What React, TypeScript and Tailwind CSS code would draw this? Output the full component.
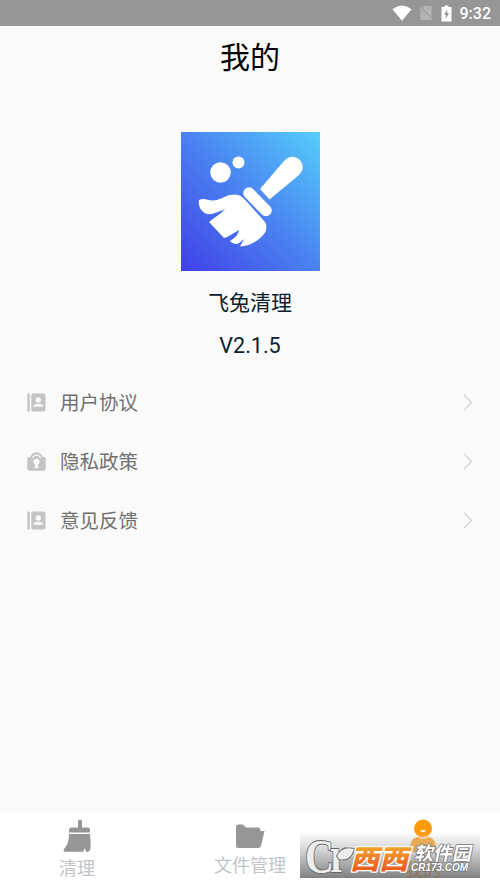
import { FC, ReactNode } from "react";

const CJK = "font-['Noto_Sans_CJK_SC',sans-serif]";

const StatusBar: FC = () => (
  <div className="flex h-[26px] items-center justify-end bg-[#969696] pr-[9px] text-white">
    {/* Wifi */}
    <svg className="mr-[7px] h-[16px] w-[20px]" viewBox="0 0 20 16">
      <path d="M0.4 4.2Q10-3 19.6 4.2L10 15.8Z" fill="#fff" />
    </svg>
    {/* No sim */}
    <svg className="mr-[8px] h-[16px] w-[14px]" viewBox="0 0 14 16">
      <path d="M5 1H12.5V15H1.5V5Z" fill="#b5b5b5" />
      <path d="M0 1.5L13.5 15" stroke="#969696" strokeWidth="2.6" />
      <path d="M0.5 2.5L13 15" stroke="#bdbdbd" strokeWidth="1.3" />
    </svg>
    {/* Battery */}
    <svg className="mr-[8px] h-[17px] w-[11px]" viewBox="0 0 11 17">
      <path d="M3.5 0.5H7.5V2H10.5V16.5H0.5V2H3.5Z" fill="#fff" />
      <path d="M6.5 4.5L3 9.8H5L4.5 14L8 8.3H6Z" fill="#969696" />
    </svg>
    <span className="pt-[2px] font-[Roboto,sans-serif] text-[16px] leading-none font-medium">
      9:32
    </span>
  </div>
);

const AppLogo: FC = () => (
  <svg className="h-[139px] w-[139px]" viewBox="0 0 139 139">
    <defs>
      <linearGradient id="logo" x1="0" y1="1" x2="1" y2="0">
        <stop offset="0" stopColor="#4040e7" />
        <stop offset="0.5" stopColor="#4a82f1" />
        <stop offset="1" stopColor="#55cefb" />
      </linearGradient>
    </defs>
    <rect width="139" height="139" fill="url(#logo)" />
    <g fill="#fff">
      <circle cx="39.5" cy="40.5" r="10.3" />
      <circle cx="57.5" cy="30.5" r="6" />
      <path d="M79 57L103 29Q111 21 119 28Q125 36 118 43L88.5 67.5Z" />
      <path
        d="M68 61L85 78.5"
        stroke="#fff"
        strokeWidth="11.5"
        strokeLinecap="round"
      />
      <path d="M18 68C24 65 28 70 36 68C44 65 50 61 57 63C61 64 63 67 66 70L84 90C86 93 86 99 83 102C77 109 69 114 59 114.5L63 107C60 109 59 111 56 112C53 112 51 111 49 109C54 106 57 103 58 98C52 101 48 105 43 106L28 90C34 85 40 82 44 77C37 80 31 83 26 82C20 80 17 74 18 68Z" />
    </g>
  </svg>
);

const ContactIcon: FC = () => (
  <svg className="h-[19px] w-[19px]" viewBox="0 0 19 19">
    <rect x="0.3" y="0.5" width="2.5" height="18" rx="0.5" fill="#c4c4c4" />
    <rect x="4.3" y="0.5" width="14.2" height="18" rx="2" fill="#c4c4c4" />
    <circle cx="11.3" cy="7" r="2.7" fill="#fafafa" />
    <path d="M6.3 13.8Q6.3 10.7 11.3 10.7T16.3 13.8Z" fill="#fafafa" />
  </svg>
);

const LockIcon: FC = () => (
  <svg className="h-[19px] w-[19px]" viewBox="0 0 19 19">
    <path
      d="M0.3 7Q0.3 5 2.5 4.8H3.5Q5 0.3 9.5 0.3T15.5 4.8H16.5Q18.7 5 18.7 7V16.5Q18.7 18.7 16.5 18.7H2.5Q0.3 18.7 0.3 16.5Z"
      fill="#c4c4c4"
    />
    <path d="M5.2 5.8Q9.5 0 13.8 5.8" fill="none" stroke="#fafafa" strokeWidth="1.2" />
    <circle cx="9.5" cy="9.8" r="3" fill="#fafafa" />
    <path d="M8.2 11H10.8L11.5 16H7.5Z" fill="#fafafa" />
  </svg>
);

interface MenuRowProps {
  icon: ReactNode;
  label: string;
}

const MenuRow: FC<MenuRowProps> = ({ icon, label }) => (
  <div className="flex h-[59px] items-center pr-[27px] pl-[27px]">
    {icon}
    <span className={`${CJK} ml-[14px] flex-1 pb-px text-[19.5px] leading-none text-[#707070]`}>
      {label}
    </span>
    <svg className="h-[17px] w-[10px]" viewBox="0 0 10 17">
      <path d="M1 0.8L8.5 8.5L1 16.2" fill="none" stroke="#d4d4d4" strokeWidth="1.4" />
    </svg>
  </div>
);

const TabBar: FC = () => (
  <div className={`${CJK} flex h-[76px] bg-white text-[18px] leading-none text-[#bfc4c9]`}>
    <div className="flex w-[154px] flex-col items-center pt-[8px]">
      <svg className="h-[32px] w-[28px]" viewBox="0 0 28 32" fill="#969696">
        <rect x="15" y="0" width="4" height="9" rx="1" />
        <path d="M8 7.5H25Q27 7.5 27 10V12.5H6V10Q6 7.5 8 7.5Z" />
        <path d="M6 14H27Q28 22 27.5 29Q27 32 23 31.8L22 28L20 31.8H1Q0 31 1 29Q6 24 6 14Z" />
      </svg>
      <span className="mt-[6px]">清理</span>
    </div>
    <div className="flex w-[192px] flex-col items-center pt-[12px]">
      <svg className="h-[25px] w-[30px]" viewBox="0 0 30 25" fill="#969696">
        <path d="M1 3Q1 0.5 3 0.5H8L11 3.5H23Q25.5 3.5 25.5 7H29.5L26 22Q25.5 24 23 24H3.5Q1 24 1 21.5Z" />
      </svg>
      <span className="mt-[6px]">文件管理</span>
    </div>
    <div className="flex w-[154px] flex-col items-center pt-[7px] text-[#f59e1a]">
      <svg className="h-[33px] w-[28px]" viewBox="0 0 28 33">
        <circle cx="14" cy="9.5" r="9" fill="#ff9a0b" />
        <path d="M10.8 11.2H17.2Q14 15.5 10.8 11.2Z" fill="#fff" />
        <path d="M1 33Q0 19 9 18Q14 21 19 18Q28 19 27 33Z" fill="#ff9a0b" />
      </svg>
      <span className="mt-[7px]">我的</span>
    </div>
  </div>
);

const Watermark: FC = () => (
  <svg className="absolute top-[832px] left-[300px] h-[46px] w-[180px]" viewBox="0 0 180 46">
    <defs>
      <linearGradient id="shade" x1="0" y1="0" x2="0" y2="1">
        <stop offset="0" stopColor="#ccc" stopOpacity="0" />
        <stop offset="0.15" stopColor="#ccc" stopOpacity="0.35" />
        <stop offset="0.55" stopColor="#999" stopOpacity="0.65" />
        <stop offset="1" stopColor="#606060" stopOpacity="0.8" />
      </linearGradient>
      <linearGradient id="orange" x1="0" y1="0" x2="0" y2="1">
        <stop offset="0.1" stopColor="#f7b430" />
        <stop offset="1" stopColor="#e84519" />
      </linearGradient>
    </defs>
    <rect width="180" height="46" fill="url(#shade)" />
    {/* Cr mark with a leaf on the r */}
    <g
      fontFamily="Liberation Serif, serif"
      fontWeight="700"
      fill="#ededed"
      stroke="#666"
      strokeWidth="1.8"
      strokeLinejoin="round"
      paintOrder="stroke"
    >
      <text x="5" y="41" fontSize="48" textLength="29" lengthAdjust="spacingAndGlyphs">
        C
      </text>
      <text x="30" y="40" fontSize="50" textLength="17" lengthAdjust="spacingAndGlyphs">
        r
      </text>
      <path d="M37 24Q42 14 54 17Q50 30 39 27Z" />
    </g>
    <g
      fontFamily="Noto Sans CJK SC, sans-serif"
      fontWeight="900"
      strokeLinejoin="round"
      paintOrder="stroke"
    >
      <g transform="translate(50 37) skewX(-14)">
        <text fontSize="27" fill="url(#orange)" stroke="#fff" strokeWidth="2.5" textLength="58" lengthAdjust="spacingAndGlyphs">
          西西
        </text>
      </g>
      <g transform="translate(114 28) skewX(-12)">
        <text fontSize="18.5" fontWeight="700" fill="#fff" stroke="#777" strokeWidth="1.6" textLength="57" lengthAdjust="spacingAndGlyphs">
          软件园
        </text>
      </g>
    </g>
    <text
      x="111"
      y="39"
      fontFamily="Liberation Sans, sans-serif"
      fontSize="10.5"
      fontWeight="700"
      fontStyle="italic"
      fill="#fff"
      stroke="#777"
      strokeWidth="1.5"
      paintOrder="stroke"
      textLength="57"
      lengthAdjust="spacingAndGlyphs"
    >
      CR173.COM
    </text>
  </svg>
);

const App: FC = () => {
  return (
    <div className="relative flex h-[888px] w-[500px] flex-col overflow-hidden bg-[#fafafa]">
      <StatusBar />
      <h1 className={`${CJK} pt-[14px] text-center text-[30px] leading-[30px] text-black`}>
        我的
      </h1>
      <div className="flex flex-col items-center pt-[62px] text-[#082030]">
        <AppLogo />
        <div className={`${CJK} mt-[20px] text-[21px] leading-[21px]`}>飞兔清理</div>
        <div className="mt-[23px] font-[Roboto,sans-serif] text-[21.5px] leading-[21px]">
          V2.1.5
        </div>
      </div>
      <div className="flex-1 pt-[17px]">
        <MenuRow icon={<ContactIcon />} label="用户协议" />
        <MenuRow icon={<LockIcon />} label="隐私政策" />
        <MenuRow icon={<ContactIcon />} label="意见反馈" />
      </div>
      <TabBar />
      <Watermark />
    </div>
  );
};

export default App;
